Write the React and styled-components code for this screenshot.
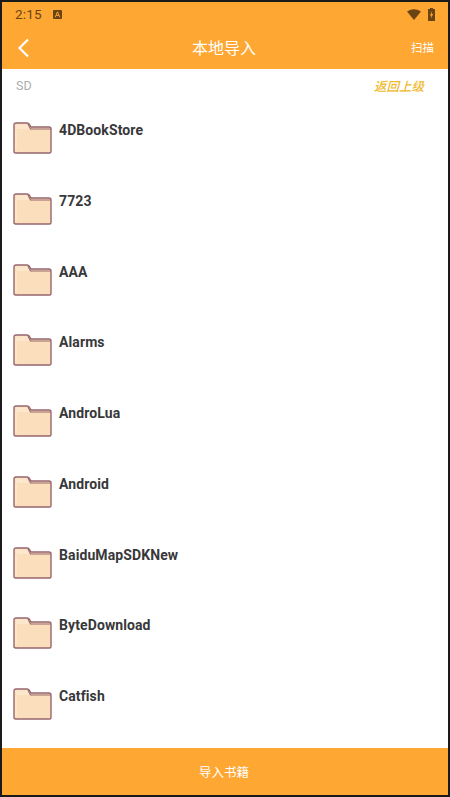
import React from "react";
import styled, { createGlobalStyle } from "styled-components";

const GlobalStyle = createGlobalStyle`
  html, body {
    margin: 0;
    padding: 0;
    background: #1a1a1a;
  }
`;

const Frame = styled.div`
  box-sizing: border-box;
  width: 450px;
  height: 797px;
  padding: 2px;
  background: #1a1a1a;
  font-family: Roboto, "Noto Sans CJK SC", sans-serif;
`;

const Screen = styled.div`
  height: 100%;
  display: flex;
  flex-direction: column;
  background: #fff;
  overflow: hidden;
`;

const Top = styled.header`
  height: 67px;
  flex: none;
  background: #ffa733;
`;

const StatusBar = styled.div`
  height: 24px;
  display: flex;
  align-items: center;
  padding: 0 13px 0 13px;
  color: #6b4413;
  font-size: 13.5px;
  letter-spacing: 0.2px;
`;

const Time = styled.span`
  width: 38px;
`;

const StatusRight = styled.div`
  margin-left: auto;
  display: flex;
  align-items: center;
  gap: 7px;
`;

const NavBar = styled.div`
  height: 43px;
  display: grid;
  grid-template-columns: 80px 1fr 80px;
  align-items: center;
  color: #fff;
`;

const Back = styled.div`
  padding-left: 15px;
  display: flex;
`;

const Title = styled.div`
  text-align: center;
  font-size: 16px;
  font-family: "Noto Sans CJK SC", sans-serif;
  margin: -2px 0 0 -2px;
`;

const Scan = styled.div`
  text-align: right;
  padding-right: 14px;
  font-size: 11.5px;
  font-family: "Noto Sans CJK SC", sans-serif;
  margin-top: -1px;
`;

const PathRow = styled.div`
  height: 33px;
  flex: none;
  display: flex;
  align-items: center;
  justify-content: space-between;
  padding: 0 24px 0 14px;
`;

const PathName = styled.span`
  font-size: 12.5px;
  color: #adadad;
`;

const Up = styled.span`
  font-size: 12.5px;
  font-style: italic;
  font-weight: 500;
  color: #f0b92e;
  font-family: "Noto Sans CJK SC", sans-serif;
`;

const List = styled.div`
  flex: 1;
  min-height: 0;
`;

const Row = styled.div`
  height: 70.75px;
  display: flex;
  align-items: flex-start;
  padding: 20px 0 0 11px;
  box-sizing: border-box;
`;

const Name = styled.span`
  margin: -2px 0 0 7px;
  font-size: 14px;
  font-weight: 700;
  letter-spacing: 0.1px;
  line-height: 20px;
  color: #38383a;
`;

const Bottom = styled.div`
  height: 47px;
  flex: none;
  display: flex;
  align-items: center;
  justify-content: center;
  background: #ffa733;
  color: #fff;
  font-size: 12.5px;
  font-family: "Noto Sans CJK SC", sans-serif;
  padding-right: 2px;
`;

const Folder = () => (
  <svg width="39" height="32" viewBox="0 0 39 32" style={{ flex: "none" }}>
    <path
      d="M1 3 Q1 1 3 1 H14 Q15.5 1 16.5 2.5 L18 5 H36 Q38 5 38 7 V29.5 Q38 31 36.5 31 H2.5 Q1 31 1 29.5 Z"
      fill="#fbdfbc"
      stroke="#96666e"
      strokeWidth="1.4"
    />
    <path d="M3 2.5 H14 L16.5 7 H3 Z" fill="#fce7cd" />
    <path
      d="M15 2 L17.5 7 H37.5"
      fill="none"
      stroke="#96666e"
      strokeWidth="1.1"
    />
    <path d="M3 8 V28" stroke="#fdeeda" strokeWidth="1" />
  </svg>
);

const Wifi = () => (
  <svg width="14" height="11" viewBox="0 0 14 11">
    <path d="M0 2.5 Q7 -2 14 2.5 L7 11 Z" fill="#6b4413" />
  </svg>
);

const Battery = () => (
  <svg width="7" height="13" viewBox="0 0 7 13">
    <path d="M2 0 H5 V1 H7 V13 H0 V1 H2 Z" fill="#6b4413" />
    <path d="M4.1 3 L1.9 7.4 H3.3 L2.9 10.5 L5.1 6 H3.7 Z" fill="#ffa733" />
  </svg>
);

const KeyboardBadge = () => (
  <svg width="9" height="9" viewBox="0 0 10 10">
    <rect width="10" height="10" rx="1" fill="#6b4413" />
    <path d="M2.5 8 L5 2 L7.5 8 M3.5 6 H6.5" fill="none" stroke="#ffa733" strokeWidth="1.1" />
  </svg>
);

const Chevron = () => (
  <svg width="13" height="20" viewBox="0 0 13 20">
    <path d="M11 1.5 L2.5 10 L11 18.5" fill="none" stroke="#fff" strokeWidth="2.2" />
  </svg>
);

const folders = [
  "4DBookStore",
  "7723",
  "AAA",
  "Alarms",
  "AndroLua",
  "Android",
  "BaiduMapSDKNew",
  "ByteDownload",
  "Catfish",
];

const App = () => {
  return (
    <Frame>
      <GlobalStyle />
      <Screen>
        <Top>
          <StatusBar>
            <Time>2:15</Time>
            <KeyboardBadge />
            <StatusRight>
              <Wifi />
              <Battery />
            </StatusRight>
          </StatusBar>
          <NavBar>
            <Back>
              <Chevron />
            </Back>
            <Title>本地导入</Title>
            <Scan>扫描</Scan>
          </NavBar>
        </Top>
        <PathRow>
          <PathName>SD</PathName>
          <Up>返回上级</Up>
        </PathRow>
        <List>
          {folders.map((name) => (
            <Row key={name}>
              <Folder />
              <Name>{name}</Name>
            </Row>
          ))}
        </List>
        <Bottom>导入书籍</Bottom>
      </Screen>
    </Frame>
  );
};

export default App;
